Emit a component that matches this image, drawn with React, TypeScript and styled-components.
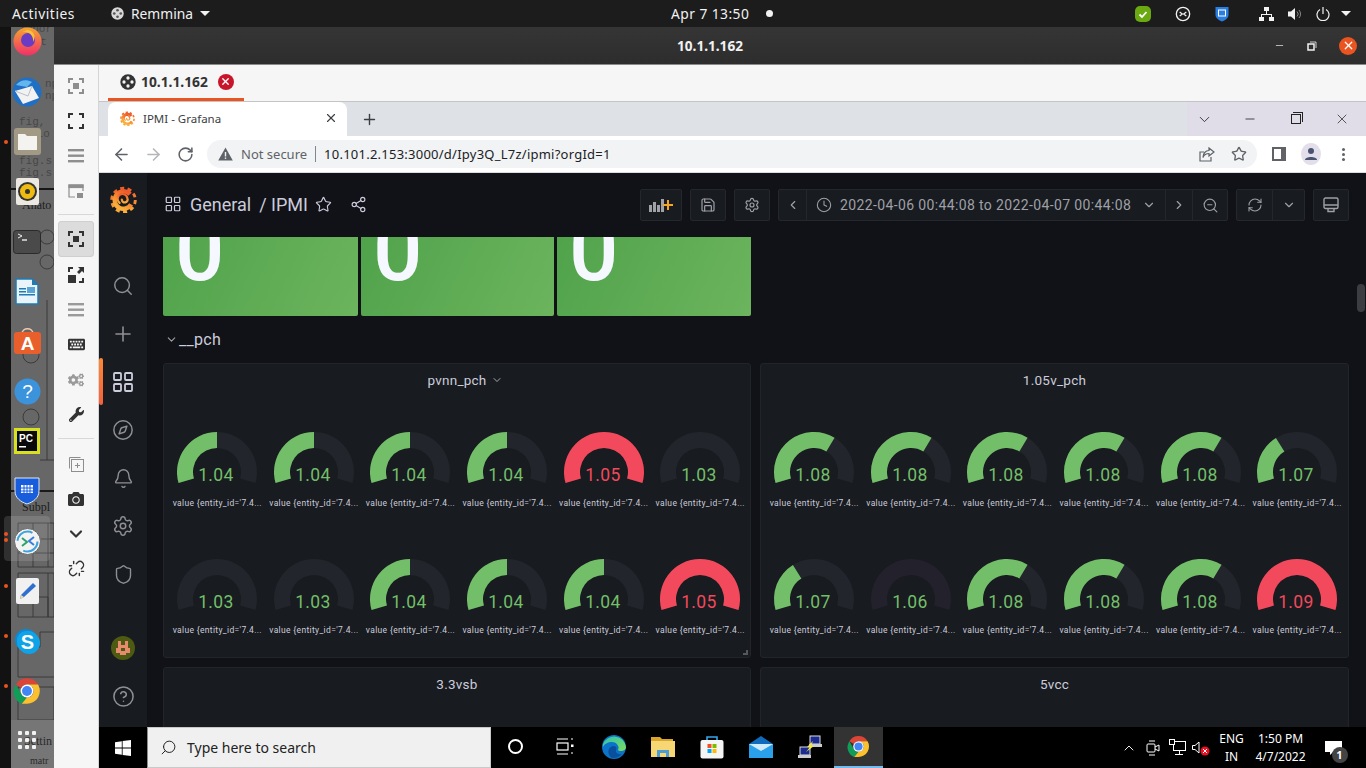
import React from "react";
import styled, { createGlobalStyle } from "styled-components";
import {
  ArrowLeft,
  ArrowRight,
  Bell,
  ChevronDown,
  ChevronLeft,
  ChevronRight,
  ChevronUp,
  CircleHelp,
  Clock,
  Compass,
  LayoutGrid,
  Minus,
  Plus,
  RefreshCw,
  RotateCw,
  Save,
  Search,
  Settings,
  Share2,
  Shield,
  Star,
  Unlink,
  X,
  ZoomOut,
} from "lucide-react";
import { FaCamera, FaCogs, FaKeyboard, FaWrench } from "react-icons/fa";

const GlobalStyle = createGlobalStyle`
  html, body {
    margin: 0;
    padding: 0;
    background: #111;
    overflow: hidden;
  }
  * {
    box-sizing: border-box;
  }
`;

const Screen = styled.div`
  width: 1366px;
  height: 768px;
  display: flex;
  flex-direction: column;
  overflow: hidden;
  font-family: "Roboto", "Liberation Sans", sans-serif;
`;

/* ubuntu top bar */
const TopBar = styled.div`
  height: 27px;
  flex: none;
  background: #1c1c1c;
  color: #f2f2f2;
  display: flex;
  align-items: center;
  font-family: "Noto Sans", "Open Sans", sans-serif;
  font-size: 13.8px;
  padding-left: 12px;
`;

const Activities = styled.div`
  width: 99px;
  letter-spacing: 0.55px;
`;

const AppMenu = styled.div`
  width: 560px;
  display: flex;
  align-items: center;
  gap: 7px;
`;

const Caret = styled.span`
  width: 0;
  height: 0;
  border-left: 5px solid transparent;
  border-right: 5px solid transparent;
  border-top: 5px solid #f2f2f2;
`;

const Clockface = styled.div`
  width: 464px;
  display: flex;
  align-items: center;
  gap: 17px;
  letter-spacing: 0.45px;
`;

const RecDot = styled.span`
  width: 7px;
  height: 7px;
  border-radius: 50%;
  background: #f2f2f2;
`;

const Tray = styled.div`
  display: flex;
  align-items: center;
`;

const TraySlot = styled.div<{ $w: number }>`
  width: ${(p) => p.$w}px;
  display: flex;
  align-items: center;
`;

const Desk = styled.div`
  flex: 1;
  min-height: 0;
  display: flex;
`;

/* dock */
const Dock = styled.div`
  width: 54px;
  flex: none;
  position: relative;
  overflow: hidden;
  background: linear-gradient(90deg, #121212 11px, #676767 11px);
  display: flex;
  flex-direction: column;
  align-items: center;
`;

const DockBackdrop = styled.svg`
  position: absolute;
  left: 0;
  top: 0;
  width: 54px;
  height: 741px;
`;

const DockItem = styled.div<{ $first?: boolean }>`
  position: relative;
  width: 54px;
  height: 49.93px;
  flex: none;
  display: flex;
  align-items: center;
  justify-content: center;
  margin-top: ${(p) => (p.$first ? "-10px" : "0")};
`;

const DockArt = styled.span`
  position: relative;
  display: flex;
`;

const DockDot = styled.span<{ $top: number }>`
  position: absolute;
  left: 4px;
  top: ${(p) => p.$top}px;
  width: 4px;
  height: 4px;
  border-radius: 50%;
  background: #e95420;
`;

const DockHighlight = styled.span`
  position: absolute;
  left: 4px;
  top: 0;
  width: 46px;
  height: 45px;
  border-radius: 4px;
  background: rgba(255, 255, 255, 0.13);
`;

/* remmina window */
const RemminaWindow = styled.div`
  flex: 1;
  min-width: 0;
  display: flex;
  flex-direction: column;
`;

const TitleBar = styled.div`
  height: 38px;
  flex: none;
  background: linear-gradient(#363535, #2e2d2d);
  border-bottom: 1px solid #8a8a8a;
  position: relative;
  display: flex;
  align-items: center;
  justify-content: center;
  color: #f2f2f2;
  font-family: "Noto Sans", "Open Sans", sans-serif;
  font-size: 13.6px;
  font-weight: 700;
`;

const WindowButtons = styled.div`
  position: absolute;
  right: 9px;
  top: 0;
  height: 37px;
  display: flex;
  align-items: center;
  gap: 22px;
`;

const CloseBubble = styled.span`
  width: 18px;
  height: 18px;
  border-radius: 50%;
  background: #e95420;
  color: #fff;
  display: flex;
  align-items: center;
  justify-content: center;
`;

const RemminaBody = styled.div`
  flex: 1;
  min-height: 0;
  display: flex;
`;

const ToolRail = styled.div`
  width: 45px;
  flex: none;
  background: #f6f6f6;
  border-right: 1px solid #d5d5d5;
  display: flex;
  flex-direction: column;
  align-items: center;
  padding-top: 3px;
  color: #333;
`;

const RailButton = styled.div<{ $active?: boolean; $dim?: boolean }>`
  width: 36px;
  height: ${(p) => (p.$active ? "36px" : "35px")};
  flex: none;
  display: flex;
  align-items: center;
  justify-content: center;
  border-radius: 4px;
  color: ${(p) => (p.$dim ? "#9a9a9a" : "#333")};
  background: ${(p) => (p.$active ? "#dcdcdc" : "transparent")};
  box-shadow: ${(p) => (p.$active ? "inset 0 0 0 1px #cfcfcf" : "none")};
`;

const RailRule = styled.div<{ $wide?: boolean }>`
  width: 36px;
  height: 1px;
  flex: none;
  background: #d8d8d8;
  margin: ${(p) => (p.$wide ? "6px 0 7px" : "6px 0")};
`;

const MainColumn = styled.div`
  flex: 1;
  min-width: 0;
  display: flex;
  flex-direction: column;
`;

const SessionTabs = styled.div`
  height: 37px;
  flex: none;
  background: #f6f6f6;
  border-bottom: 1px solid #c4c4c4;
  padding-left: 9px;
  display: flex;
`;

const SessionTab = styled.div`
  width: 136px;
  height: 36px;
  border-bottom: 3px solid #e95420;
  display: flex;
  align-items: center;
  padding-left: 12px;
  gap: 5px;
  color: #333;
  font-family: "Noto Sans", "Open Sans", sans-serif;
  font-size: 13.8px;
  font-weight: 700;
`;

const SessionClose = styled.span`
  width: 16px;
  height: 16px;
  border-radius: 50%;
  background: #c7162b;
  color: #fff;
  margin-left: 5px;
  display: flex;
  align-items: center;
  justify-content: center;
`;

/* chrome */
const TabStrip = styled.div`
  height: 34px;
  flex: none;
  background: #dee1e6;
  display: flex;
  align-items: stretch;
  padding-left: 9px;
  color: #3c4043;
`;

const ChromeTab = styled.div`
  width: 239px;
  height: 34px;
  background: #fff;
  border-radius: 8px 8px 0 0;
  display: flex;
  align-items: center;
  padding: 0 9px 2px 12px;
  gap: 8px;
  font-family: "Noto Sans", "Open Sans", sans-serif;
  font-size: 11.5px;
`;

const TabTitle = styled.span`
  flex: 1;
`;

const NewTab = styled.div`
  width: 44px;
  height: 34px;
  display: flex;
  align-items: center;
  justify-content: center;
`;

const Caption = styled.div`
  margin-left: auto;
  width: 179px;
  height: 34px;
  background: #e0dce8;
  display: flex;
  align-items: center;
  justify-content: flex-end;
  padding-right: 1px;
  color: #222;
`;

const CaptionButton = styled.div`
  width: 46px;
  height: 34px;
  flex: none;
  display: flex;
  align-items: center;
  justify-content: center;
`;

const RestoreGlyph = styled.span`
  width: 10px;
  height: 10px;
  border: 1px solid #222;
  position: relative;
  &::after {
    content: "";
    position: absolute;
    left: 1px;
    top: -3px;
    width: 9px;
    height: 9px;
    border-top: 1px solid #222;
    border-right: 1px solid #222;
  }
`;

const Toolbar = styled.div`
  height: 37px;
  flex: none;
  background: #fff;
  border-bottom: 1px solid #dadce0;
  display: flex;
  align-items: center;
  padding-left: 6px;
  color: #5f6368;
`;

const ToolSlot = styled.div<{ $w: number; $faded?: boolean }>`
  width: ${(p) => p.$w}px;
  height: 28px;
  flex: none;
  display: flex;
  align-items: center;
  justify-content: center;
  color: ${(p) => (p.$faded ? "#b4b6b9" : "#5f6368")};
`;

const Omnibox = styled.div`
  width: 1050px;
  height: 28px;
  flex: none;
  margin-left: 6px;
  background: #f1f3f4;
  border-radius: 14px;
  display: flex;
  align-items: center;
  padding: 0 2px 0 11px;
  font-family: "Noto Sans", "Open Sans", sans-serif;
  font-size: 13px;
`;

const NotSecure = styled.span`
  margin-left: 8px;
  color: #5f6368;
`;

const UrlRule = styled.span`
  width: 1px;
  height: 16px;
  background: #80868b;
  margin: 0 8px;
`;

const Url = styled.span`
  flex: 1;
  color: #202124;
  letter-spacing: 0.24px;
`;

const Avatar = styled.span`
  width: 22px;
  height: 22px;
  border-radius: 50%;
  background: #e2dfea;
  display: flex;
  align-items: center;
  justify-content: center;
`;

const SidePanelGlyph = styled.span`
  width: 14px;
  height: 14px;
  background: #fff;
  border: 2px solid #5f6368;
  border-right-width: 5px;
`;

const DotsGlyph = styled.span`
  width: 3px;
  height: 3px;
  border-radius: 50%;
  background: #5f6368;
  box-shadow: 0 -5px 0 #5f6368, 0 5px 0 #5f6368;
`;

/* grafana */
const Grafana = styled.div`
  flex: 1;
  min-height: 0;
  display: flex;
  background: #111217;
`;

const SideNav = styled.nav`
  width: 48px;
  flex: none;
  background: #181b1f;
  display: flex;
  flex-direction: column;
  padding-bottom: 7px;
`;

const NavLogo = styled.div`
  height: 89px;
  flex: none;
  padding: 13px 0 0 1px;
  display: flex;
  justify-content: center;
  align-items: flex-start;
`;

const NavItem = styled.div<{ $active?: boolean; $push?: boolean }>`
  position: relative;
  height: 48px;
  flex: none;
  display: flex;
  align-items: center;
  justify-content: center;
  color: ${(p) => (p.$active ? "#ccccdc" : "#8f9097")};
  margin-top: ${(p) => (p.$push ? "auto" : "0")};
  &::before {
    content: "";
    display: ${(p) => (p.$active ? "block" : "none")};
    position: absolute;
    left: 0;
    top: 0;
    width: 4px;
    height: 47px;
    border-radius: 2px;
    background: linear-gradient(#ff8833, #f55f3e);
  }
`;

const Content = styled.div`
  position: relative;
  flex: 1;
  min-width: 0;
  display: flex;
  flex-direction: column;
`;

const DashHeader = styled.header`
  height: 64px;
  flex: none;
  display: flex;
  align-items: center;
  padding: 0 17px 0 17px;
  color: #ccccdc;
`;

const Crumbs = styled.div`
  display: flex;
  align-items: center;
  margin-bottom: 2px;
`;

const DashTitle = styled.div`
  display: flex;
  align-items: center;
  font-size: 18px;
  margin-left: 8px;
  gap: 8px;
`;

const HeaderIcon = styled.span<{ $gap: number }>`
  display: flex;
  margin-left: ${(p) => p.$gap}px;
`;

const HeaderTools = styled.div`
  margin-left: auto;
  display: flex;
  align-items: center;
  gap: 8px;
`;

const ToolGroup = styled.div`
  height: 32px;
  display: flex;
  background: #181b1f;
  border: 1px solid #24272c;
  border-radius: 2px;
  color: #9fa0a8;
`;

const ToolCell = styled.div<{ $w: number }>`
  width: ${(p) => p.$w}px;
  height: 30px;
  display: flex;
  align-items: center;
  justify-content: center;
  & + & {
    border-left: 1px solid #24272c;
  }
`;

const TimeCell = styled(ToolCell)`
  justify-content: flex-start;
  padding-left: 9px;
  gap: 8px;
  font-size: 14px;
  letter-spacing: 0.37px;
  white-space: nowrap;
`;

const TimeCaret = styled.span`
  display: flex;
  margin-left: 3px;
`;

const ScrollArea = styled.div`
  flex: 1;
  min-height: 0;
  overflow: hidden;
  padding: 0 17px 0 16px;
`;

const ScrollThumb = styled.div`
  position: absolute;
  right: 1px;
  top: 111px;
  width: 8px;
  height: 28px;
  border-radius: 4px;
  background: #3b3d43;
`;

const StatRow = styled.div`
  width: 588px;
  height: 79px;
  display: grid;
  grid-template-columns: 195px 193px 194px;
  gap: 3px;
`;

const StatPanel = styled.div`
  height: 79px;
  overflow: hidden;
  position: relative;
  border-radius: 0 0 2px 2px;
  background: linear-gradient(115deg, #50a34b 0%, #6cb45e 100%);
`;

const StatValue = styled.div`
  position: absolute;
  left: 12px;
  bottom: 22px;
  color: #f6f8ff;
  font-size: 87px;
  line-height: 87px;
  font-weight: 500;
`;

const RowTitle = styled.div`
  height: 47px;
  display: flex;
  align-items: center;
  gap: 1px;
  padding-left: 2px;
  color: #ccccdc;
  font-size: 16px;
  letter-spacing: 0.3px;
`;

const PanelGrid = styled.div`
  display: grid;
  grid-template-columns: 588px 589px;
  gap: 9px;
`;

const Panel = styled.section<{ $tall?: boolean }>`
  position: relative;
  height: ${(p) => (p.$tall ? "295px" : "120px")};
  background: #181b1f;
  border: 1px solid #212429;
  border-radius: 3px;
`;

const PanelTitle = styled.div<{ $shift?: number }>`
  height: 31px;
  margin-bottom: 2px;
  display: flex;
  align-items: center;
  justify-content: center;
  gap: 4px;
  padding-left: ${(p) => p.$shift ?? 0}px;
  color: #ccccdc;
  font-size: 13.5px;
  letter-spacing: 0.25px;
`;

const ResizeHandle = styled.span`
  position: absolute;
  right: 2px;
  bottom: 2px;
  width: 5px;
  height: 5px;
  border-right: 2px solid #55575d;
  border-bottom: 2px solid #55575d;
`;

const GaugeGrid = styled.div`
  display: grid;
  grid-template-columns: repeat(6, 96.6px);
  grid-auto-rows: 127px;
  padding-left: 5px;
`;

const GaugeCell = styled.div`
  display: flex;
  flex-direction: column;
  align-items: center;
  padding-top: 32px;
`;

const GaugeArt = styled.svg`
  width: 96px;
  height: 62px;
  flex: none;
`;

const GaugeValue = styled.text<{ $hot: boolean }>`
  font-family: "Roboto", sans-serif;
  font-size: 17.5px;
  fill: ${(p) => (p.$hot ? "#f2495c" : "#73bf69")};
  letter-spacing: 0.4px;
`;

const GaugeLabel = styled.div`
  height: 24px;
  display: flex;
  align-items: center;
  color: #ccccdc;
  font-size: 8.5px;
  letter-spacing: 0.34px;
  white-space: nowrap;
`;

/* windows taskbar */
const Taskbar = styled.div`
  height: 41px;
  flex: none;
  background: #000;
  display: flex;
  align-items: stretch;
  color: #fff;
  font-family: "Noto Sans", "Open Sans", sans-serif;
`;

const StartButton = styled.div`
  width: 48px;
  display: flex;
  align-items: center;
  justify-content: center;
`;

const SearchBox = styled.div`
  width: 344px;
  background: #f0f0f0;
  border: 1px solid #c9c9c9;
  border-left-color: #8c8c8c;
  display: flex;
  align-items: center;
  gap: 10px;
  padding-left: 12px;
  color: #222;
  font-size: 14px;
`;

const FlippedIcon = styled.span`
  display: flex;
  transform: scaleX(-1);
`;

const TaskIcons = styled.div`
  display: flex;
`;

const TaskIcon = styled.div<{ $active?: boolean }>`
  width: 49px;
  display: flex;
  align-items: center;
  justify-content: center;
  background: ${(p) => (p.$active ? "#333" : "transparent")};
  border-bottom: 2px solid ${(p) => (p.$active ? "#76b9ed" : "transparent")};
`;

const CortanaRing = styled.span`
  width: 15px;
  height: 15px;
  border-radius: 50%;
  border: 2px solid #fff;
`;

const SysTray = styled.div`
  margin-left: auto;
  display: flex;
  align-items: center;
`;

const SysSlot = styled.div<{ $w: number }>`
  width: ${(p) => p.$w}px;
  display: flex;
  align-items: center;
  justify-content: center;
  text-align: center;
  font-size: 12px;
  line-height: 18px;
`;

const NoteWrap = styled.span`
  position: relative;
  display: flex;
`;

const NoteBadge = styled.span`
  position: absolute;
  left: 7px;
  top: 7px;
  width: 16px;
  height: 16px;
  border-radius: 50%;
  background: #444;
  font-size: 11px;
  line-height: 16px;
  text-align: center;
  font-weight: 700;
`;

/* drawings */
const GrafanaLogo = ({ size, id }: { size: number; id: string }) => (
  <svg width={size} height={size} viewBox="0 0 24 24">
    <defs>
      <linearGradient id={id} x1="0" y1="1" x2="0" y2="0">
        <stop offset="0" stopColor="#fbb03b" />
        <stop offset="1" stopColor="#ef5a29" />
      </linearGradient>
    </defs>
    <circle cx="12" cy="12.5" r="10.5" fill="none" stroke={`url(#${id})`} strokeWidth="2.6" strokeDasharray="3.6 3" />
    <circle cx="12" cy="12.5" r="7.8" fill="none" stroke={`url(#${id})`} strokeWidth="4" strokeDasharray="39 10" transform="rotate(30 12 12.5)" />
    <path d="M8.5 15 A4.4 4.4 0 1 1 15.5 11 A2.6 2.6 0 1 1 10.5 12" fill="none" stroke={`url(#${id})`} strokeWidth="2" strokeLinecap="round" />
  </svg>
);

const ChromeLogo = ({ size }: { size: number }) => (
  <svg width={size} height={size} viewBox="0 0 48 48">
    <path d="M24 2 A22 22 0 0 1 43 13 L24 13 A11 11 0 0 0 14 19 L5 13 A22 22 0 0 1 24 2Z" fill="#db4437" />
    <path d="M5 13 L14.500 29.500 A11 11 0 0 0 24 35 L15 46 A22 22 0 0 1 5 13Z" fill="#0f9d58" />
    <path d="M43 13 A22 22 0 0 1 24 46 L15 46 L24 35 A11 11 0 0 0 33.500 18 L24 13Z" fill="#fbc02d" />
    <circle cx="24" cy="24" r="11" fill="#fff" />
    <circle cx="24" cy="24" r="8.500" fill="#4285f4" />
  </svg>
);

const RemminaGlyph = ({ size, color }: { size: number; color: string }) => (
  <svg width={size} height={size} viewBox="0 0 24 24" fill="none">
    <circle cx="12" cy="12" r="10" stroke={color} strokeWidth="2" />
    <path d="M7 9 L11 12 L7 15 M17 9 L13 12 L17 15" stroke={color} strokeWidth="1.8" />
  </svg>
);

const RemminaDisc = ({ size, disc, mark }: { size: number; disc: string; mark: string }) => (
  <svg width={size} height={size} viewBox="0 0 24 24">
    <circle cx="12" cy="12" r="11.500" fill={disc} />
    <circle cx="12" cy="6" r="2.500" fill={mark} />
    <circle cx="12" cy="18" r="2.500" fill={mark} />
    <circle cx="6" cy="12" r="2.500" fill={mark} />
    <circle cx="18" cy="12" r="2.500" fill={mark} />
  </svg>
);

const Corners = ({ filled, color }: { filled?: boolean; color: string }) => (
  <svg width="16" height="16" viewBox="0 0 16 16" fill="none" stroke={color} strokeWidth="2">
    <path d="M1 5V1H5M11 1H15V5M15 11V15H11M5 15H1V11" />
    {filled && <rect x="5" y="5" width="6" height="6" fill={color} stroke="none" />}
  </svg>
);

const Hamburger = ({ color }: { color: string }) => (
  <svg width="16" height="14" viewBox="0 0 16 14" fill={color}>
    <rect y="0" width="16" height="2.400" />
    <rect y="5.500" width="16" height="2.400" />
    <rect y="11" width="16" height="2.400" />
  </svg>
);

const PipIcon = () => (
  <svg width="16" height="16" viewBox="0 0 16 16" fill="none" stroke="#8e8e8e" strokeWidth="1.200">
    <path d="M1 12V2H15V8" />
    <rect x="1" y="2" width="14" height="2.500" fill="#8e8e8e" />
    <path d="M1 12V14H7" />
    <rect x="9" y="10" width="6" height="5" fill="#8e8e8e" stroke="none" />
  </svg>
);

const ExpandIcon = () => (
  <svg width="16" height="16" viewBox="0 0 16 16" fill="#333">
    <path d="M10 0H16V6L14 4L11 7L9 5L12 2Z" />
    <path d="M0 8H8V16H0Z" />
    <path d="M14 11H16V16H11V14H14Z" />
    <path d="M0 0H5V2H2V5H0Z" />
  </svg>
);

const DuplicateIcon = () => (
  <svg width="16" height="16" viewBox="0 0 16 16" fill="none" stroke="#8e8e8e" strokeWidth="1">
    <path d="M1.500 12.500V1.500H12.500" />
    <rect x="3.500" y="3.500" width="12" height="12" />
    <path d="M9.500 7V12M7 9.500H12" />
  </svg>
);

const WarnIcon = () => (
  <svg width="15" height="14" viewBox="0 0 15 14">
    <path d="M7.500 0.500L14.800 13.500H0.200Z" fill="#5f6368" />
    <rect x="6.800" y="5" width="1.400" height="4.500" fill="#f1f3f4" />
    <rect x="6.800" y="10.500" width="1.400" height="1.400" fill="#f1f3f4" />
  </svg>
);

const PageShareIcon = () => (
  <svg width="16" height="15" viewBox="0 0 16 15" fill="none" stroke="#5f6368" strokeWidth="1.200">
    <path d="M5 5H1V14H12V10" />
    <path d="M10 1L15 5L10 9V6.500C7 6.500 5 8 4 10.500C4 6.500 6.500 3.500 10 3.500Z" />
  </svg>
);

const KioskIcon = () => (
  <svg width="16" height="16" viewBox="0 0 16 16" fill="none" stroke="#9fa0a8" strokeWidth="1.400">
    <rect x="1" y="1" width="14" height="10.500" rx="1.500" />
    <path d="M1 8H15M5 11.500V14.500H11V11.500" />
  </svg>
);

const WindowsLogo = ({ size }: { size: number }) => (
  <svg width={size} height={size} viewBox="0 0 16 16" fill="#fff">
    <path d="M0 2.200L6.800 1.200V7.600H0ZM7.600 1.100L16 0V7.600H7.600ZM0 8.400H6.800V14.800L0 13.800ZM7.600 8.400H16V16L7.600 14.900Z" />
  </svg>
);

const TaskViewIcon = () => (
  <svg width="18" height="18" viewBox="0 0 18 18" fill="none" stroke="#fff" strokeWidth="1.200">
    <path d="M1 1H12M1 16H12" />
    <rect x="1" y="5" width="11" height="7" />
    <path d="M15 1H17" />
    <rect x="15" y="6.500" width="2.500" height="2.500" fill="#fff" stroke="none" />
    <path d="M15 15H17" />
  </svg>
);

const EdgeIcon = () => (
  <svg width="24" height="24" viewBox="0 0 24 24">
    <defs>
      <linearGradient id="edgeGlow" x1="0" y1="0" x2="1" y2="1">
        <stop offset="0" stopColor="#2cc3b5" />
        <stop offset="1" stopColor="#7fdd5a" />
      </linearGradient>
    </defs>
    <circle cx="12" cy="12" r="12" fill="#0c74c8" />
    <path d="M1 9 A12 12 0 0 1 24 12 C24 16 18 17 16 15 C18 12 15 7 10 7 C6 7 2 9 1 12Z" fill="url(#edgeGlow)" />
    <path d="M10 23 C5 20 5 12 11 11 C15 11 15 14 14 15 C13 18 17 20 20 19 A12 12 0 0 1 10 23Z" fill="#0a4f9c" />
  </svg>
);

const FolderIcon = () => (
  <svg width="24" height="22" viewBox="0 0 24 22">
    <path d="M0 1H9L11 3H22V6H0Z" fill="#d9a52a" />
    <rect x="0" y="5" width="24" height="16" fill="#f7d774" />
    <path d="M6 21V14H18V21H15V17H9V21Z" fill="#4a9bd6" />
  </svg>
);

const StoreIcon = () => (
  <svg width="24" height="24" viewBox="0 0 24 24" fill="none">
    <path d="M7 6V2H17V6" stroke="#35a6ea" strokeWidth="1.600" />
    <rect x="0.500" y="5" width="23" height="18.500" rx="2" fill="#f5f5f5" />
    <rect x="7.500" y="9" width="4" height="4" fill="#f25022" />
    <rect x="12.500" y="9" width="4" height="4" fill="#7fba00" />
    <rect x="7.500" y="14" width="4" height="4" fill="#00a4ef" />
    <rect x="12.500" y="14" width="4" height="4" fill="#ffb900" />
  </svg>
);

const MailIcon = () => (
  <svg width="24" height="22" viewBox="0 0 24 22">
    <path d="M0 8L12 0L24 8V22H0Z" fill="#0f6cbd" />
    <path d="M0 8H24V22H0Z" fill="#2aa0ea" />
    <path d="M0 8H24L12 15Z" fill="#cfeafb" />
  </svg>
);

const PuttyIcon = () => (
  <svg width="24" height="24" viewBox="0 0 24 24">
    <rect x="12" y="1" width="10" height="8" fill="#1b2a8c" stroke="#ddd" />
    <rect x="11" y="9" width="13" height="3" fill="#ccc" />
    <rect x="2" y="12" width="10" height="8" fill="#1b2a8c" stroke="#ddd" />
    <rect x="0" y="20" width="13" height="3" fill="#ccc" />
    <path d="M15 6L9 12H12L8 17L16 11H13Z" fill="#f6e93c" />
  </svg>
);

const DockIcons: Record<string, React.ReactNode> = {
  firefox: (
    <svg width="29" height="29" viewBox="0 0 29 29">
      <defs>
        <linearGradient id="fxBody" x1="0" y1="0" x2="0" y2="1">
          <stop offset="0" stopColor="#f7a52f" />
          <stop offset="1" stopColor="#f0306a" />
        </linearGradient>
      </defs>
      <circle cx="14.500" cy="14.500" r="14" fill="url(#fxBody)" />
      <circle cx="15" cy="13" r="7" fill="#6a3bc4" />
      <path d="M9 5C15 4 21 8 20 15C24 9 20 3 14 3Z" fill="#f9c13a" />
    </svg>
  ),
  thunderbird: (
    <svg width="30" height="30" viewBox="0 0 30 30">
      <circle cx="15" cy="15" r="14.500" fill="#1f6fc4" />
      <path d="M4 8C8 3 14 2 20 5L15 10Z" fill="#63b5ee" />
      <path d="M3 14L20 9L27 21L11 27Z" fill="#f2f2f2" />
      <path d="M3 14L16 19L20 9" fill="none" stroke="#b9bfc7" />
    </svg>
  ),
  files: (
    <svg width="27" height="27" viewBox="0 0 27 27">
      <rect width="27" height="27" rx="3" fill="#a39a85" />
      <path d="M4 6H11L13 8H23V22H4Z" fill="#f5f3ef" />
    </svg>
  ),
  rhythmbox: (
    <svg width="23" height="27" viewBox="0 0 23 27">
      <rect width="23" height="27" rx="2" fill="#ece9e2" />
      <circle cx="11.500" cy="13.500" r="9.500" fill="#333" />
      <circle cx="11.500" cy="13.500" r="7.500" fill="#eebb11" />
      <circle cx="11.500" cy="13.500" r="2.500" fill="#333" />
    </svg>
  ),
  terminal: (
    <svg width="28" height="24" viewBox="0 0 28 24">
      <rect x="0.500" y="0.500" width="27" height="23" rx="3" fill="#4a4a4a" stroke="#2a2a2a" />
      <path d="M5 4L9 6L5 8" fill="none" stroke="#eee" />
      <path d="M9 10H14" stroke="#eee" strokeWidth="1.400" />
    </svg>
  ),
  writer: (
    <svg width="24" height="27" viewBox="0 0 24 27">
      <path d="M1 1H17L23 7V26H1Z" fill="#e9f3fa" stroke="#1e7bb4" strokeWidth="1.500" />
      <path d="M17 1L23 7H17Z" fill="#1e7bb4" />
      <rect x="4" y="10" width="7" height="1.500" fill="#1e7bb4" />
      <rect x="4" y="13" width="7" height="1.500" fill="#1e7bb4" />
      <rect x="4" y="16" width="16" height="1.500" fill="#1e7bb4" />
      <rect x="12" y="9" width="8" height="6" fill="#5aa5d6" />
    </svg>
  ),
  store: (
    <svg width="27" height="27" viewBox="0 0 27 27">
      <path d="M8 6C8 -1 19 -1 19 6" fill="none" stroke="#f8c9a8" strokeWidth="1.500" />
      <rect y="4" width="27" height="22" rx="3" fill="#e95f2b" />
      <text x="13.500" y="22" textAnchor="middle" fontFamily="Liberation Sans" fontWeight="700" fontSize="19" fill="#fff">A</text>
    </svg>
  ),
  help: (
    <svg width="27" height="27" viewBox="0 0 27 27">
      <circle cx="13.500" cy="13.500" r="13" fill="#3b93dc" />
      <text x="13.500" y="20" textAnchor="middle" fontFamily="Liberation Sans" fontSize="19" fill="#fff">?</text>
    </svg>
  ),
  pycharm: (
    <svg width="26" height="26" viewBox="0 0 26 26">
      <rect width="26" height="26" fill="#d9e021" />
      <rect x="3" y="3" width="20" height="20" fill="#0a0a0a" />
      <text x="5" y="14" fontFamily="Liberation Sans" fontWeight="700" fontSize="10" fill="#fff">PC</text>
      <rect x="5" y="18" width="7" height="1.500" fill="#fff" />
    </svg>
  ),
  bitwarden: (
    <svg width="26" height="28" viewBox="0 0 26 28">
      <path d="M1 1H25V14C25 21 19 25 13 27C7 25 1 21 1 14Z" fill="#175ddc" stroke="#dfe9f5" />
      <path d="M7 8H19V16H7Z" fill="#fff" />
      <path d="M7 11H19M7 14H19M10 8V17M13 8V17M16 8V17" stroke="#175ddc" />
    </svg>
  ),
  remmina: (
    <svg width="27" height="27" viewBox="0 0 27 27" fill="none">
      <circle cx="13.500" cy="13.500" r="13" fill="#f3f3f3" stroke="#666" />
      <circle cx="13.500" cy="13.500" r="10" stroke="#3ea3dc" strokeWidth="2" strokeDasharray="20 12" />
      <path d="M8 10L13 14L8 18" stroke="#2aa36b" strokeWidth="2" />
      <path d="M20 9L15 13L20 17" stroke="#3b7ddc" strokeWidth="2" />
    </svg>
  ),
  editor: (
    <svg width="23" height="26" viewBox="0 0 23 26">
      <rect width="23" height="26" rx="2" fill="#f1f1f1" />
      <path d="M17 5L20 8L8 19L4 21L5 17Z" fill="#2f6fd0" />
      <path d="M4 21L5 17L8 19Z" fill="#f5d9a0" />
    </svg>
  ),
  skype: (
    <svg width="27" height="27" viewBox="0 0 27 27">
      <circle cx="12" cy="12" r="11" fill="#0a8ad6" />
      <circle cx="15" cy="15" r="11" fill="#0fa3e8" />
      <rect x="3" y="3" width="21" height="21" rx="9" fill="#0fa3e8" />
      <text x="13.500" y="21" textAnchor="middle" fontFamily="Liberation Sans" fontWeight="700" fontSize="20" fill="#fff">S</text>
    </svg>
  ),
};

const dockOrder: { key: string; dots?: number[]; active?: boolean }[] = [
  { key: "firefox" },
  { key: "thunderbird" },
  { key: "files", dots: [23] },
  { key: "rhythmbox" },
  { key: "terminal" },
  { key: "writer" },
  { key: "store" },
  { key: "help" },
  { key: "pycharm" },
  { key: "bitwarden" },
  { key: "remmina", dots: [16, 22], active: true },
  { key: "editor", dots: [18] },
  { key: "skype", dots: [18] },
  { key: "chrome", dots: [18] },
];

const polar = (r: number, deg: number, cx = 48, cy = 43) => {
  const rad = ((deg - 90) * Math.PI) / 180;
  return `${(cx + r * Math.cos(rad)).toFixed(2)} ${(cy + r * Math.sin(rad)).toFixed(2)}`;
};

const sector = (from: number, to: number) => {
  const large = to - from > 180 ? 1 : 0;
  return `M${polar(40, from)} A40 40 0 ${large} 1 ${polar(40, to)} L${polar(24, to)} A24 24 0 ${large} 0 ${polar(24, from)} Z`;
};

const SWEEP_START = -106;
const SWEEP = 212;

type GaugeData = { value: string; fill: number; track?: string };

const Gauge = ({ value, fill, track = "#22252b" }: GaugeData) => {
  const hot = fill >= 1;
  return (
    <GaugeCell>
      <GaugeArt viewBox="0 0 96 62">
        <path d={sector(SWEEP_START, SWEEP_START + SWEEP)} fill={track} />
        {fill > 0 && <path d={sector(SWEEP_START, SWEEP_START + SWEEP * fill)} fill={hot ? "#f2495c" : "#73bf69"} />}
        <GaugeValue $hot={hot} x="47" y="52" textAnchor="middle">
          {value}
        </GaugeValue>
      </GaugeArt>
      <GaugeLabel>value {"{"}entity_id='7.4...</GaugeLabel>
    </GaugeCell>
  );
};

const g = (value: string, fill: number, track?: string): GaugeData => ({ value, fill, track });

const pchGauges = [
  g("1.04", 0.5), g("1.04", 0.5), g("1.04", 0.5), g("1.04", 0.5), g("1.05", 1), g("1.03", 0),
  g("1.03", 0), g("1.03", 0), g("1.04", 0.5), g("1.04", 0.5), g("1.04", 0.5), g("1.05", 1),
];

const v105Gauges = [
  g("1.08", 0.646), g("1.08", 0.646), g("1.08", 0.646), g("1.08", 0.646), g("1.08", 0.646), g("1.07", 0.35),
  g("1.07", 0.35), g("1.06", 0, "#22212c"), g("1.08", 0.646), g("1.08", 0.646), g("1.08", 0.646), g("1.09", 1),
];

const App = () => {
  return (
    <Screen>
      <GlobalStyle />
      <TopBar>
        <Activities>Activities</Activities>
        <AppMenu>
          <RemminaDisc size={13} disc="#d8d8d8" mark="#555" />
          <span>Remmina</span>
          <Caret />
        </AppMenu>
        <Clockface>
          <span>Apr 7 13:50</span>
          <RecDot />
        </Clockface>
        <Tray>
          <TraySlot $w={40}>
            <svg width="16" height="16" viewBox="0 0 16 16">
              <rect width="16" height="16" rx="5" fill="#6aa912" />
              <path d="M4.500 8.500L7 11L11.500 6" fill="none" stroke="#fff" strokeWidth="1.800" />
            </svg>
          </TraySlot>
          <TraySlot $w={40}>
            <RemminaGlyph size={16} color="#f2f2f2" />
          </TraySlot>
          <TraySlot $w={44}>
            <svg width="14" height="16" viewBox="0 0 14 16">
              <path d="M0.500 1H13.500V9C13.500 12 10 14.500 7 15.500C4 14.500 0.500 12 0.500 9Z" fill="#2a7de1" />
              <rect x="3.500" y="4" width="7" height="6" fill="none" stroke="#fff" />
            </svg>
          </TraySlot>
          <TraySlot $w={29}>
            <svg width="15" height="14" viewBox="0 0 15 14" fill="#f2f2f2">
              <rect x="5" y="0" width="5" height="4" />
              <rect x="0" y="10" width="5" height="4" />
              <rect x="10" y="10" width="5" height="4" />
              <path d="M7 4H8V7H13V10H12V8H3V10H2V7H7Z" />
            </svg>
          </TraySlot>
          <TraySlot $w={28}>
            <svg width="15" height="14" viewBox="0 0 15 14" fill="none">
              <path d="M0 4.500H3L7 1V13L3 9.500H0Z" fill="#f2f2f2" />
              <path d="M9 4.500A3.500 3.500 0 0 1 9 9.500M11 3A6 6 0 0 1 11 11" stroke="#888" />
            </svg>
          </TraySlot>
          <TraySlot $w={25}>
            <svg width="14" height="14" viewBox="0 0 14 14" fill="none" stroke="#f2f2f2" strokeWidth="1.200">
              <path d="M4 2.500A6 6 0 1 0 10 2.500M7 0V7" />
            </svg>
          </TraySlot>
          <Caret />
        </Tray>
      </TopBar>
      <Desk>
        <Dock>
          <DockBackdrop viewBox="0 0 54 741">
            <g fontFamily="Liberation Mono, monospace" fontSize="11" fill="#474747">
              <text x="19" y="5">impor</text>
              <text x="27" y="18">ort</text>
              <text x="45" y="60">np</text>
              <text x="45" y="72">np</text>
              <text x="19" y="98">fig,</text>
              <text x="30" y="110">plo</text>
              <text x="19" y="137">fig.s</text>
              <text x="19" y="149">fig.s</text>
            </g>
            <rect x="11" y="161" width="43" height="2" fill="#161616" />
            <text x="22" y="182" fontFamily="Liberation Serif, serif" fontSize="12" fill="#1c1c1c">Anato</text>
            <g fill="none" stroke="#303030" strokeWidth="0.800">
              <circle cx="47" cy="210" r="7" />
              <circle cx="47" cy="235" r="7" />
              <circle cx="31" cy="328" r="8" />
              <circle cx="31" cy="390" r="8" />
              <path d="M47 273V433M40 433H54" />
              <path d="M18 496H54V540H18ZM33 496V540M48 496V540M18 512H54M18 526H54" />
              <path d="M18 546H54V590H18ZM18 570H48V590M33 570V590M48 546V590" />
              <path d="M18 620V650H54M18 620H40V605H54" />
              <path d="M18 660H54V693H18Z" />
            </g>
            <rect x="11" y="463" width="43" height="2" fill="#1a1a1a" />
            <text x="22" y="484" fontFamily="Liberation Serif, serif" fontSize="12" fill="#1c1c1c">Subpl</text>
            <rect x="11" y="693" width="43" height="48" fill="#767676" />
            <text x="24" y="718" fontFamily="Liberation Serif, serif" fontSize="12" fill="#2a2a2a">Settin</text>
            <text x="30" y="737" fontFamily="Liberation Serif, serif" fontSize="10" fill="#2a2a2a">matr</text>
          </DockBackdrop>
          {dockOrder.map((item, i) => (
            <DockItem key={item.key} $first={i === 0}>
              {item.active && <DockHighlight />}
              {item.dots?.map((top) => (
                <DockDot key={top} $top={top} />
              ))}
              <DockArt>
                {item.key === "chrome" ? <ChromeLogo size={28} /> : DockIcons[item.key]}
              </DockArt>
            </DockItem>
          ))}
          <DockItem>
            <DockArt>
              <svg width="21" height="21" viewBox="0 0 21 21" fill="#f2f2f2">
                {[1, 8, 15].map((y) =>
                  [1, 8, 15].map((x) => <rect key={`${x}${y}`} x={x} y={y} width="4" height="4" rx="1" />)
                )}
              </svg>
            </DockArt>
          </DockItem>
        </Dock>
        <RemminaWindow>
          <TitleBar>
            10.1.1.162
            <WindowButtons>
              <Minus size={11} strokeWidth={1.5} />
              <svg width="10" height="10" viewBox="0 0 10 10" fill="none" stroke="#f2f2f2">
                <rect x="1" y="3" width="6" height="6" strokeWidth="1.500" />
                <path d="M3 1H9V7" strokeWidth="0.800" />
              </svg>
              <CloseBubble>
                <X size={13} strokeWidth={2.2} />
              </CloseBubble>
            </WindowButtons>
          </TitleBar>
          <RemminaBody>
            <ToolRail>
              <RailButton $dim><Corners filled color="#8e8e8e" /></RailButton>
              <RailButton><Corners color="#333" /></RailButton>
              <RailButton><Hamburger color="#8e8e8e" /></RailButton>
              <RailButton><PipIcon /></RailButton>
              <RailRule />
              <RailButton $active><Corners filled color="#333" /></RailButton>
              <RailButton><ExpandIcon /></RailButton>
              <RailButton><Hamburger color="#9a9a9a" /></RailButton>
              <RailButton><FaKeyboard size={17} /></RailButton>
              <RailButton $dim><FaCogs size={16} /></RailButton>
              <RailButton><FaWrench size={15} /></RailButton>
              <RailRule $wide />
              <RailButton><DuplicateIcon /></RailButton>
              <RailButton><FaCamera size={16} /></RailButton>
              <RailButton><ChevronDown size={20} strokeWidth={2.6} /></RailButton>
              <RailButton><Unlink size={17} strokeWidth={2} /></RailButton>
            </ToolRail>
            <MainColumn>
              <SessionTabs>
                <SessionTab>
                  <RemminaDisc size={16} disc="#333" mark="#f6f6f6" />
                  <span>10.1.1.162</span>
                  <SessionClose>
                    <X size={11} strokeWidth={3} />
                  </SessionClose>
                </SessionTab>
              </SessionTabs>
              <TabStrip>
                <ChromeTab>
                  <GrafanaLogo size={15} id="favicon" />
                  <TabTitle>IPMI - Grafana</TabTitle>
                  <X size={14} strokeWidth={2} />
                </ChromeTab>
                <NewTab>
                  <Plus size={17} strokeWidth={2} />
                </NewTab>
                <Caption>
                  <CaptionButton><ChevronDown size={17} strokeWidth={1.2} /></CaptionButton>
                  <CaptionButton><Minus size={14} strokeWidth={1.4} /></CaptionButton>
                  <CaptionButton><RestoreGlyph /></CaptionButton>
                  <CaptionButton><X size={16} strokeWidth={1.1} /></CaptionButton>
                </Caption>
              </TabStrip>
              <Toolbar>
                <ToolSlot $w={32}><ArrowLeft size={19} strokeWidth={2} /></ToolSlot>
                <ToolSlot $w={32} $faded><ArrowRight size={19} strokeWidth={2} /></ToolSlot>
                <ToolSlot $w={32}><RotateCw size={17} strokeWidth={2.2} /></ToolSlot>
                <Omnibox>
                  <WarnIcon />
                  <NotSecure>Not secure</NotSecure>
                  <UrlRule />
                  <Url>10.101.2.153:3000/d/Ipy3Q_L7z/ipmi?orgId=1</Url>
                  <ToolSlot $w={32}><PageShareIcon /></ToolSlot>
                  <ToolSlot $w={32}><Star size={16} strokeWidth={2} /></ToolSlot>
                </Omnibox>
                <ToolSlot $w={44}><SidePanelGlyph /></ToolSlot>
                <ToolSlot $w={20}><Avatar><svg width="14" height="14" viewBox="0 0 14 14" fill="#4a5470"><circle cx="7" cy="4" r="3" /><path d="M1 13C1 9 13 9 13 13Z" /></svg></Avatar></ToolSlot>
                <ToolSlot $w={44}><DotsGlyph /></ToolSlot>
              </Toolbar>
              <Grafana>
                <SideNav>
                  <NavLogo><GrafanaLogo size={27} id="navlogo" /></NavLogo>
                  <NavItem><Search size={22} strokeWidth={1.6} /></NavItem>
                  <NavItem><Plus size={24} strokeWidth={1.6} /></NavItem>
                  <NavItem $active><LayoutGrid size={24} strokeWidth={1.8} /></NavItem>
                  <NavItem><Compass size={22} strokeWidth={1.6} /></NavItem>
                  <NavItem><Bell size={21} strokeWidth={1.6} /></NavItem>
                  <NavItem><Settings size={22} strokeWidth={1.6} /></NavItem>
                  <NavItem><Shield size={21} strokeWidth={1.6} /></NavItem>
                  <NavItem $push>
                    <svg width="24" height="24" viewBox="0 0 24 24">
                      <circle cx="12" cy="12" r="12" fill="#4d5a12" />
                      <path d="M7 5H10V9H14V5H17V12H19V17H15V19H9V17H5V12H7Z" fill="#e88a6e" />
                      <rect x="10" y="12" width="4" height="3" fill="#4d5a12" />
                    </svg>
                  </NavItem>
                  <NavItem><CircleHelp size={23} strokeWidth={1.6} /></NavItem>
                </SideNav>
                <Content>
                  <DashHeader>
                    <Crumbs>
                      <LayoutGrid size={18} strokeWidth={1.6} />
                      <DashTitle>
                        <span>General</span>
                        <span>/ IPMI</span>
                      </DashTitle>
                      <HeaderIcon $gap={7}><Star size={17} strokeWidth={1.6} /></HeaderIcon>
                      <HeaderIcon $gap={18}><Share2 size={17} strokeWidth={1.6} /></HeaderIcon>
                    </Crumbs>
                    <HeaderTools>
                      <ToolGroup>
                        <ToolCell $w={40}>
                          <svg width="24" height="16" viewBox="0 0 24 16">
                            <path d="M0 8H3V15H0ZM4 5H7V15H4ZM8 8H11V15H8ZM12 2H15V15H12Z" fill="#9fa0a8" />
                            <path d="M18 3H20V7H24V9H20V13H18V9H14V7H18Z" fill="#f5a623" />
                          </svg>
                        </ToolCell>
                      </ToolGroup>
                      <ToolGroup><ToolCell $w={34}><Save size={16} strokeWidth={1.8} /></ToolCell></ToolGroup>
                      <ToolGroup><ToolCell $w={34}><Settings size={16} strokeWidth={1.8} /></ToolCell></ToolGroup>
                      <ToolGroup>
                        <ToolCell $w={27}><ChevronLeft size={14} strokeWidth={2} /></ToolCell>
                        <TimeCell $w={359}>
                          <Clock size={16} strokeWidth={1.6} />
                          <span>2022-04-06 00:44:08 to 2022-04-07 00:44:08</span>
                          <TimeCaret><ChevronDown size={14} strokeWidth={2} /></TimeCaret>
                        </TimeCell>
                        <ToolCell $w={27}><ChevronRight size={14} strokeWidth={2} /></ToolCell>
                        <ToolCell $w={35}><ZoomOut size={17} strokeWidth={1.6} /></ToolCell>
                      </ToolGroup>
                      <ToolGroup>
                        <ToolCell $w={35}><RefreshCw size={16} strokeWidth={1.6} /></ToolCell>
                        <ToolCell $w={32}><ChevronDown size={14} strokeWidth={2} /></ToolCell>
                      </ToolGroup>
                      <ToolGroup><ToolCell $w={34}><KioskIcon /></ToolCell></ToolGroup>
                    </HeaderTools>
                  </DashHeader>
                  <ScrollThumb />
                  <ScrollArea>
                    <StatRow>
                      <StatPanel><StatValue>0</StatValue></StatPanel>
                      <StatPanel><StatValue>0</StatValue></StatPanel>
                      <StatPanel><StatValue>0</StatValue></StatPanel>
                    </StatRow>
                    <RowTitle>
                      <ChevronDown size={13} strokeWidth={2} color="#9fa0a8" />
                      <span>__pch</span>
                    </RowTitle>
                    <PanelGrid>
                      <Panel $tall>
                        <PanelTitle $shift={16}>
                          pvnn_pch
                          <ChevronDown size={12} strokeWidth={1.6} />
                        </PanelTitle>
                        <GaugeGrid>
                          {pchGauges.map((d, i) => (
                            <Gauge key={i} {...d} />
                          ))}
                        </GaugeGrid>
                        <ResizeHandle />
                      </Panel>
                      <Panel $tall>
                        <PanelTitle>1.05v_pch</PanelTitle>
                        <GaugeGrid>
                          {v105Gauges.map((d, i) => (
                            <Gauge key={i} {...d} />
                          ))}
                        </GaugeGrid>
                      </Panel>
                      <Panel><PanelTitle>3.3vsb</PanelTitle></Panel>
                      <Panel><PanelTitle>5vcc</PanelTitle></Panel>
                    </PanelGrid>
                  </ScrollArea>
                </Content>
              </Grafana>
              <Taskbar>
                <StartButton><WindowsLogo size={16} /></StartButton>
                <SearchBox>
                  <FlippedIcon><Search size={17} strokeWidth={1.4} color="#222" /></FlippedIcon>
                  <span>Type here to search</span>
                </SearchBox>
                <TaskIcons>
                  <TaskIcon><CortanaRing /></TaskIcon>
                  <TaskIcon><TaskViewIcon /></TaskIcon>
                  <TaskIcon><EdgeIcon /></TaskIcon>
                  <TaskIcon><FolderIcon /></TaskIcon>
                  <TaskIcon><StoreIcon /></TaskIcon>
                  <TaskIcon><MailIcon /></TaskIcon>
                  <TaskIcon><PuttyIcon /></TaskIcon>
                  <TaskIcon $active><ChromeLogo size={23} /></TaskIcon>
                </TaskIcons>
                <SysTray>
                  <SysSlot $w={25}><ChevronUp size={16} strokeWidth={1.4} /></SysSlot>
                  <SysSlot $w={24}>
                    <svg width="14" height="18" viewBox="0 0 14 18" fill="none" stroke="#fff">
                      <rect x="1" y="5" width="8" height="8" rx="1" />
                      <path d="M9 8L13 6V12L9 10M3 2H9M3 16H9" />
                    </svg>
                  </SysSlot>
                  <SysSlot $w={24}>
                    <svg width="17" height="17" viewBox="0 0 17 17" fill="none" stroke="#fff">
                      <rect x="4.500" y="2.500" width="12" height="9" />
                      <rect x="0.500" y="0.500" width="5" height="5" fill="#000" />
                      <path d="M10.500 11.500V15M6 15.500H14" />
                    </svg>
                  </SysSlot>
                  <SysSlot $w={24}>
                    <svg width="18" height="16" viewBox="0 0 18 16">
                      <path d="M0.500 5.500H3L7 2V13L3 9.500H0.500Z" fill="none" stroke="#fff" />
                      <circle cx="13" cy="11" r="4.500" fill="#e81123" />
                      <path d="M11 9L15 13M15 9L11 13" stroke="#fff" />
                    </svg>
                  </SysSlot>
                  <SysSlot $w={37}>ENG<br />IN</SysSlot>
                  <SysSlot $w={61}>1:50 PM<br />4/7/2022</SysSlot>
                  <SysSlot $w={44}>
                    <NoteWrap>
                      <svg width="17" height="16" viewBox="0 0 17 16" fill="#fff">
                        <path d="M0 1H17V12H8L5 15V12H0Z" />
                      </svg>
                      <NoteBadge>1</NoteBadge>
                    </NoteWrap>
                  </SysSlot>
                  <SysSlot $w={11} />
                </SysTray>
              </Taskbar>
            </MainColumn>
          </RemminaBody>
        </RemminaWindow>
      </Desk>
    </Screen>
  );
};

export default App;
